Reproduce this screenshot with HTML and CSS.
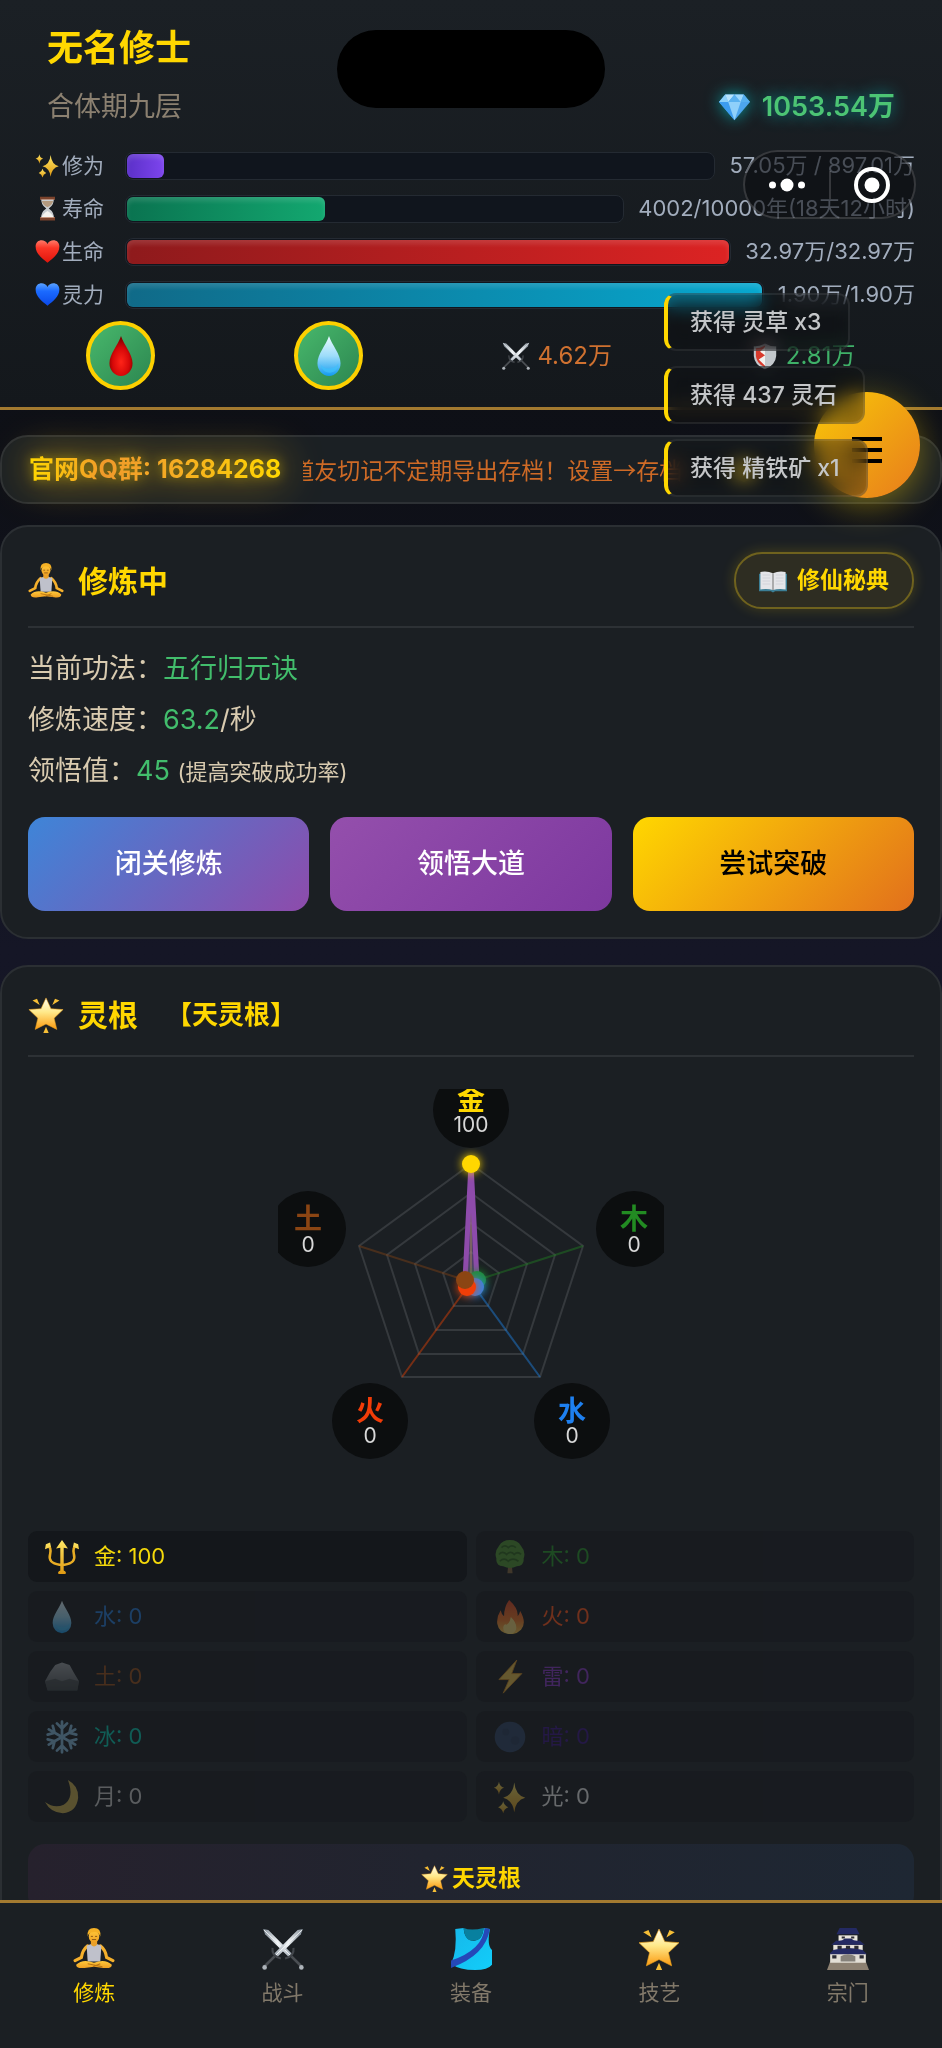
FILE: index.html
```html
<!DOCTYPE html>
<html lang="zh-CN">
<head>
<meta charset="utf-8">
<meta name="viewport" content="width=device-width, initial-scale=1">
<title>修仙</title>
<link rel="stylesheet" href="styles.css">
</head>
<body>
<svg class="sprite" aria-hidden="true">
  <defs>
    <linearGradient id="g-gold" x1="0" y1="0" x2="0" y2="1"><stop offset="0" stop-color="#ffe866"/><stop offset="1" stop-color="#e09a12"/></linearGradient>
    <linearGradient id="g-star" x1="0" y1="0" x2="0" y2="1"><stop offset="0" stop-color="#fffdf0"/><stop offset=".45" stop-color="#ffe98a"/><stop offset="1" stop-color="#fb9a10"/></linearGradient>
    <linearGradient id="g-skin" x1="0" y1="0" x2="0" y2="1"><stop offset="0" stop-color="#ffc83a"/><stop offset="1" stop-color="#ee9f22"/></linearGradient>
    <linearGradient id="g-water" x1="0" y1="0" x2="0" y2="1"><stop offset="0" stop-color="#eafaff"/><stop offset=".5" stop-color="#9ddcfa"/><stop offset="1" stop-color="#129bf0"/></linearGradient>
    <radialGradient id="g-blood" cx=".5" cy=".65" r=".6"><stop offset="0" stop-color="#ff2418"/><stop offset=".6" stop-color="#d60808"/><stop offset="1" stop-color="#7c0000"/></radialGradient>
    <linearGradient id="g-red" x1="0" y1="0" x2="0" y2="1"><stop offset="0" stop-color="#ff7a68"/><stop offset=".35" stop-color="#fb3526"/><stop offset="1" stop-color="#e0150c"/></linearGradient>
    <linearGradient id="g-blue" x1="0" y1="0" x2="0" y2="1"><stop offset="0" stop-color="#5aa2ff"/><stop offset=".35" stop-color="#1b6bff"/><stop offset="1" stop-color="#0a48e8"/></linearGradient>
    <linearGradient id="g-vest" x1="0" y1="0" x2="1" y2="1"><stop offset="0" stop-color="#16b8ea"/><stop offset="1" stop-color="#12cdfa"/></linearGradient>
    <linearGradient id="g-fire" x1="0" y1="0" x2="0" y2="1"><stop offset="0" stop-color="#e8421c"/><stop offset=".6" stop-color="#fb7a20"/><stop offset="1" stop-color="#ffd24a"/></linearGradient>
    <linearGradient id="g-blade" x1="0" y1="0" x2="1" y2="0"><stop offset="0" stop-color="#7c8792"/><stop offset=".5" stop-color="#eef2f5"/><stop offset="1" stop-color="#98a2ac"/></linearGradient>
    <linearGradient id="g-rock" x1="0" y1="0" x2="0" y2="1"><stop offset="0" stop-color="#a2a6aa"/><stop offset="1" stop-color="#4f5558"/></linearGradient>
  </defs>
  <symbol id="i-sparkles" viewBox="0 0 40 40">
    <g fill="url(#g-gold)"><path d="M25 3Q26.500 18 38 21Q26.500 24 25 38Q23.500 24 12 21Q23.500 18 25 3Z"/><path d="M7 2Q8 8 13 9Q8 10 7 17Q6 10 1 9Q6 8 7 2Z"/><path d="M12 25Q13 30 18 32Q13 34 12 39Q11 34 6 32Q11 30 12 25Z"/></g>
  </symbol>
  <symbol id="i-hourglass" viewBox="0 0 40 40">
    <path d="M10 4H30Q31 14 22 20Q31 26 30 36H10Q9 26 18 20Q9 14 10 4Z" fill="#c9cdd0"/>
    <path d="M11 8H29Q28 14 20 18Q12 14 11 8Z" fill="#b39a7f"/><path d="M10 35Q12 29 20 24Q28 29 30 35Z" fill="#f6f4ef"/>
    <path d="M8 1H32V5H8ZM8 35H32V39H8Z" fill="#7b432c"/><path d="M8 5H32V6H8ZM8 34H32V35H8Z" fill="#b77758"/>
  </symbol>
  <symbol id="i-heart-red" viewBox="0 0 40 40"><path d="M20 38C12 31 1 24 1 12C1 0 16-1 20 8C24-1 39 0 39 12C39 24 28 31 20 38Z" fill="url(#g-red)"/></symbol>
  <symbol id="i-heart-blue" viewBox="0 0 40 40"><path d="M20 38C12 31 1 24 1 12C1 0 16-1 20 8C24-1 39 0 39 12C39 24 28 31 20 38Z" fill="url(#g-blue)"/></symbol>
  <symbol id="i-gem" viewBox="0 0 40 40" preserveAspectRatio="none">
    <path d="M8 2H32L40 13L20 39L0 13Z" fill="#4da6ee"/><path d="M8 2L12 13H0Z" fill="#8bd0fb"/><path d="M8 2H20L12 13Z" fill="#b8e4fd"/><path d="M20 2L28 13H12Z" fill="#5ab2f0"/><path d="M20 2H32L28 13Z" fill="#9dd8fc"/><path d="M32 2L40 13H28Z" fill="#57b0ef"/><path d="M0 13H12L20 39Z" fill="#3c9cf0"/><path d="M12 13H28L20 39Z" fill="#8fd0fa"/>
  </symbol>
  <symbol id="i-blood" viewBox="0 0 40 40"><path d="M20 1C23 10 31 18 31 27A11 12 0 0 1 9 27C9 18 17 10 20 1Z" fill="url(#g-blood)"/></symbol>
  <symbol id="i-water" viewBox="0 0 40 40"><path d="M20 1C23 10 31 18 31 27A11 12 0 0 1 9 27C9 18 17 10 20 1Z" fill="url(#g-water)"/><path d="M12 28Q14 36 21 36Q29 35 29 27Q26 32 20 32Q15 32 12 28Z" fill="#3fc1fb" opacity=".7"/></symbol>
  <symbol id="i-swords" viewBox="0 0 40 40">
    <g id="one-sword"><path d="M1 1L6 2L29 25L26 28L3 6Z" fill="url(#g-blade)"/><path d="M2 2L27 26" stroke="#fff" stroke-width=".8"/><path d="M30 19Q31 27 22 29" fill="none" stroke="#42464b" stroke-width="2"/><path d="M28 27L37 36" stroke="#4a4e53" stroke-width="2.500"/><circle cx="37.500" cy="37.500" r="2.200" fill="#aeb4ba"/></g>
    <use href="#one-sword" transform="matrix(-1 0 0 1 40 0)"/>
  </symbol>
  <symbol id="i-shield" viewBox="0 0 40 40"><path d="M20 2Q29 7 36 6V20Q35 33 20 39Q5 33 4 20V6Q11 7 20 2Z" fill="#c3c8cc"/><path d="M20 5V36Q8 31 7 20V9Q13 9 20 5Z" fill="#d83a2c"/><path d="M20 7L13 14L20 19L11 25L20 34Z" fill="#f3f1ee"/></symbol>
  <symbol id="i-lotus" viewBox="0 0 40 40">
    <path d="M14 17Q9 21 8 28L2 31M26 17Q31 21 32 28L38 31" fill="none" stroke="#f5b02c" stroke-width="3" stroke-linecap="round"/>
    <path d="M17 12H23V17H17Z" fill="#e8a02a"/><path d="M13 17Q20 13 27 17L26 32H14Z" fill="#bfc1cb"/><path d="M17 16Q20 19 23 16L22 14H18Z" fill="#e8a02a"/>
    <ellipse cx="20" cy="8" rx="5" ry="6" fill="url(#g-skin)"/><path d="M14 8Q13 0 20 0Q27 0 26 8Q24 3 19 4Q15 4 14 8Z" fill="#f5b125"/><path d="M17 8H19M21 8H23M18 11H22" stroke="#7b4a12" stroke-width=".8"/>
    <path d="M3 35Q9 29 20 33Q31 29 37 35Q37 39 29 38L20 37L11 38Q3 39 3 35Z" fill="url(#g-skin)"/><path d="M14 34L28 37M26 34L19 37" stroke="#b87312" stroke-width="1"/>
  </symbol>
  <symbol id="i-book" viewBox="0 0 40 40" preserveAspectRatio="none"><path d="M0 8V37H17L20 39L23 37H40V8Z" fill="#3b7e95"/><path d="M2 5Q12 3 20 7V35Q12 32 2 34ZM38 5Q28 3 20 7V35Q28 32 38 34Z" fill="#e4e5e9"/><path d="M20 7V35" stroke="#777" stroke-width="1.500"/><path d="M5 10H16M5 15H16M5 20H16M5 25H16M24 10H35M24 15H35M24 20H35M24 25H35" stroke="#c9cbd2" stroke-width="1"/></symbol>
  <symbol id="i-star" viewBox="0 0 40 40"><path d="M20 1L25.500 13L39 14L29 23.500L32 36L20 30L8 36L11 23.500L1 14L14.500 13Z" fill="url(#g-star)" stroke="#f3a51d" stroke-width=".6" stroke-linejoin="round"/><path d="M5 4L10 2L13 9ZM35 4L30 2L27 9ZM20 33L23 40H17Z" fill="#f6be36"/></symbol>
  <symbol id="i-vest" viewBox="0 0 40 40"><path d="M5 1L13 0Q14 13 24 12Q31 11 32 0L38 1Q35 17 40 21V35Q36 40 24 40Q9 40 1 34Q7 22 5 1Z" fill="url(#g-vest)"/><path d="M13 0Q20 3 32 0Q31 12 23 12Q14 13 13 0Z" fill="#08809f"/><path d="M33 0L38 1Q34 26 1 38L1 31Q31 21 33 0Z" fill="#2548b8"/></symbol>
  <symbol id="i-castle" viewBox="0 0 40 40">
    <path d="M3 32H37L40 40H0Z" fill="#8d8172"/><path d="M3 24H37V33H3Z" fill="#e3dfd6"/><path d="M6 16H34V23H6Z" fill="#e6e2da"/><path d="M11 7H29V14H11Z" fill="#ebe7df"/>
    <path d="M12 0H28L31 6H9ZM9 12Q14 13 17 10H23Q26 13 31 12L36 16H4ZM6 21Q20 17 34 21L38 25H2Z" fill="#242a63"/><path d="M13 32V27Q20 23 27 27V32Z" fill="#85817a"/>
    <path d="M14 8H17V10H14ZM23 8H26V10H23ZM10 17H14V20H10ZM18 17H22V20H18ZM26 17H30V20H26ZM5 26H9V29H5ZM31 26H35V29H31Z" fill="#2c2c35"/>
  </symbol>
  <symbol id="i-trident" viewBox="0 0 40 40"><path d="M3 6Q8 9 6 17Q3 27 17 29H23Q37 27 34 17Q32 9 37 6" fill="none" stroke="#e9ad24" stroke-width="3"/><path d="M18 36V9L13 10L20 0L27 10L22 9V36Q26 38 24 40H16Q14 38 18 36ZM0 11L1 5L6 3L7 8ZM40 11L39 5L34 3L33 8Z" fill="url(#g-gold)"/></symbol>
  <symbol id="i-tree" viewBox="0 0 40 40"><path d="M18 28H22L23 39H17Z" fill="#8b6a3a"/><path d="M20 0Q29 0 33 7Q39 14 36 22Q37 30 28 31Q20 35 12 31Q3 30 4 22Q1 14 7 7Q11 0 20 0Z" fill="#4f9a2b"/><path d="M10 9Q14 5 18 9Q22 5 27 9M7 17Q11 12 16 17Q21 12 25 17Q29 13 33 17M8 25Q13 20 18 25Q23 20 30 25" fill="none" stroke="#2d6a17" stroke-width="2"/></symbol>
  <symbol id="i-fire" viewBox="0 0 40 40"><path d="M19 0Q30 10 29 19Q31 17 32 13Q40 27 33 35Q27 41 19 40Q7 39 5 28Q4 20 9 12Q10 17 13 19Q13 8 19 0Z" fill="url(#g-fire)"/><path d="M21 20Q29 28 27 35Q25 40 19 40Q12 39 12 32Q13 27 16 29Q20 27 21 20Z" fill="#ffe27a"/></symbol>
  <symbol id="i-rock" viewBox="0 0 40 40"><path d="M0 25L6 14L12 6L20 3L29 6L34 15L40 25L38 36H3Z" fill="url(#g-rock)"/><path d="M0 25L12 22L20 25L29 22L40 25L38 36H3Z" fill="#34393a" opacity=".6"/></symbol>
  <symbol id="i-bolt" viewBox="0 0 40 40"><path d="M28 0L7 23H19L12 39L34 16H22Z" fill="#f7c948" stroke="#d88d1b"/></symbol>
  <symbol id="i-snow" viewBox="0 0 40 40"><g fill="none" stroke="#86bfe6" stroke-width="3.200" stroke-linecap="round"><g id="snow-arm"><path d="M20 20V2M14 4L20 10L26 4"/></g><use href="#snow-arm" transform="rotate(60 20 20)"/><use href="#snow-arm" transform="rotate(120 20 20)"/><use href="#snow-arm" transform="rotate(180 20 20)"/><use href="#snow-arm" transform="rotate(240 20 20)"/><use href="#snow-arm" transform="rotate(300 20 20)"/></g></symbol>
  <symbol id="i-newmoon" viewBox="0 0 40 40"><circle cx="20" cy="20" r="18" fill="#2c4265"/><circle cx="15" cy="14" r="4" fill="#263a5a"/><circle cx="26" cy="24" r="5" fill="#263a5a"/></symbol>
  <symbol id="i-moon" viewBox="0 0 40 40"><path d="M27 0Q40 7 39 21Q37 38 21 39Q7 39 0 26Q11 34 22 29Q35 21 27 0Z" fill="#d4b44a"/></symbol>
  <symbol id="i-box" viewBox="0 0 40 40"><path d="M1 9L20 1L39 9V33L20 40L1 33Z" fill="#e7c22c"/></symbol>
</svg>

<div class="app">
  <header class="hero">
    <div class="identity">
      <div>
        <h1 class="name">无名修士</h1>
        <p class="realm">合体期九层</p>
      </div>
      <p class="stones"><svg class="gem"><use href="#i-gem"/></svg>1053.54万</p>
    </div>
    <div class="bars">
      <div class="bar-row"><span class="bar-label"><svg><use href="#i-sparkles"/></svg>修为</span><span class="track"><span class="fill exp" style="width:6.36%"></span></span><span class="bar-value">57.05万 / 897.01万</span></div>
      <div class="bar-row"><span class="bar-label"><svg><use href="#i-hourglass"/></svg>寿命</span><span class="track"><span class="fill life" style="width:40.02%"></span></span><span class="bar-value">4002/10000年(18天12小时)</span></div>
      <div class="bar-row"><span class="bar-label"><svg><use href="#i-heart-red"/></svg>生命</span><span class="track"><span class="fill hp" style="width:100%"></span></span><span class="bar-value">32.97万/32.97万</span></div>
      <div class="bar-row"><span class="bar-label"><svg><use href="#i-heart-blue"/></svg>灵力</span><span class="track"><span class="fill mp" style="width:100%"></span></span><span class="bar-value">1.90万/1.90万</span></div>
    </div>
    <div class="stats">
      <button class="potion" aria-label="生命药水"><svg><use href="#i-blood"/></svg></button>
      <button class="potion" aria-label="灵力药水"><svg><use href="#i-water"/></svg></button>
      <span class="stat attack"><svg><use href="#i-swords"/></svg>4.62万</span>
      <span class="stat defense"><svg><use href="#i-shield"/></svg>2.81万</span>
    </div>
  </header>

  <main class="content">
    <section class="notice">
      <strong class="group">官网QQ群: 16284268</strong>
      <div class="marquee"><p class="marquee-text">道友切记不定期导出存档！设置→存档 <svg><use href="#i-box"/></svg></p></div>
    </section>

    <section class="panel">
      <div class="panel-head">
        <h2 class="panel-title"><svg><use href="#i-lotus"/></svg>修炼中</h2>
        <button class="guide"><svg><use href="#i-book"/></svg>修仙秘典</button>
      </div>
      <div class="facts">
        <p>当前功法：<span class="good">五行归元诀</span></p>
        <p>修炼速度：<span class="good">63.2</span>/秒</p>
        <p>领悟值：<span class="good">45</span> <small>(提高突破成功率)</small></p>
      </div>
      <div class="actions">
        <button class="action retreat">闭关修炼</button>
        <button class="action insight">领悟大道</button>
        <button class="action breakthrough">尝试突破</button>
      </div>
    </section>

    <section class="panel">
      <div class="panel-head">
        <h2 class="panel-title"><svg><use href="#i-star"/></svg>灵根<span class="root-type">【天灵根】</span></h2>
      </div>
      <svg class="radar" viewBox="0 0 386 386" role="img" aria-label="灵根五行图">
        <g fill="none" stroke="#35393d" stroke-width="2">
          <path d="M193 75L305 157L262 288H124L81 157Z"/>
          <path d="M193 104L277 166L245 265H141L109 166Z"/>
          <path d="M193 134L249 175L228 241H158L137 175Z"/>
          <path d="M193 163L221 184L210 217H176L165 184Z"/>
        </g>
        <g stroke-width="2" opacity=".4"><path d="M193 193V75" stroke="#ffd700"/><path d="M193 193L305 157" stroke="#228b22"/><path d="M193 193L262 288" stroke="#1e90ff"/><path d="M193 193L124 288" stroke="#ff4500"/><path d="M193 193L81 157" stroke="#8b4513"/></g>
        <path d="M193 75L199 191L196 198H190L187 191Z" fill="#7d5ba4" fill-opacity=".55" stroke="#8e4bab" stroke-width="5"/>
        <circle class="glow-gold" cx="193" cy="75" r="9" fill="#ffd700"/>
        <circle class="glow-green" cx="199" cy="191" r="9" fill="#228b3a"/>
        <circle class="glow-blue" cx="197" cy="198" r="9" fill="#3d80d8"/>
        <circle class="glow-red" cx="189" cy="198" r="9" fill="#f03e08"/>
        <circle cx="187" cy="191" r="9" fill="#8b4513"/>
        <g fill="#0c0e0f"><circle cx="193" cy="21" r="38"/><circle cx="356" cy="140" r="38"/><circle cx="294" cy="332" r="38"/><circle cx="92" cy="332" r="38"/><circle cx="30" cy="140" r="38"/></g>
        <g class="radar-name"><text x="193" y="21" fill="#ffd700">金</text><text x="356" y="140" fill="#228b22">木</text><text x="294" y="332" fill="#1e80f0">水</text><text x="92" y="332" fill="#f23c08">火</text><text x="30" y="140" fill="#8b4513">土</text></g>
        <g class="radar-num"><text x="193" y="43">100</text><text x="356" y="163">0</text><text x="294" y="354">0</text><text x="92" y="354">0</text><text x="30" y="163">0</text></g>
      </svg>
      <ul class="roots">
        <li class="root metal"><svg><use href="#i-trident"/></svg>金: 100</li>
        <li class="root wood empty"><svg><use href="#i-tree"/></svg>木: 0</li>
        <li class="root water empty"><svg><use href="#i-water"/></svg>水: 0</li>
        <li class="root flame empty"><svg><use href="#i-fire"/></svg>火: 0</li>
        <li class="root earth empty"><svg><use href="#i-rock"/></svg>土: 0</li>
        <li class="root thunder empty"><svg><use href="#i-bolt"/></svg>雷: 0</li>
        <li class="root ice empty"><svg><use href="#i-snow"/></svg>冰: 0</li>
        <li class="root dark empty"><svg><use href="#i-newmoon"/></svg>暗: 0</li>
        <li class="root moon empty"><svg><use href="#i-moon"/></svg>月: 0</li>
        <li class="root light empty"><svg><use href="#i-sparkles"/></svg>光: 0</li>
      </ul>
      <div class="grade"><svg><use href="#i-star"/></svg>天灵根</div>
    </section>
  </main>

  <nav class="tabs">
    <a class="tab active" href="#cultivate"><svg><use href="#i-lotus"/></svg>修炼</a>
    <a class="tab" href="#battle"><svg><use href="#i-swords"/></svg>战斗</a>
    <a class="tab" href="#gear"><svg><use href="#i-vest"/></svg>装备</a>
    <a class="tab" href="#craft"><svg><use href="#i-star"/></svg>技艺</a>
    <a class="tab" href="#sect"><svg><use href="#i-castle"/></svg>宗门</a>
  </nav>

  <div class="island"></div>
  <button class="fab" aria-label="菜单"><span></span><span></span><span></span></button>
  <div class="toasts">
    <p class="toast">获得 灵草 x3</p>
    <p class="toast">获得 437 灵石</p>
    <p class="toast">获得 精铁矿 x1</p>
  </div>
  <div class="capsule">
    <button class="capsule-btn" aria-label="更多"><svg viewBox="0 0 36 36"><g fill="#fff"><circle cx="3.500" cy="18" r="3.500"/><circle cx="18" cy="18" r="6.500"/><circle cx="32.500" cy="18" r="3.500"/></g></svg></button>
    <span class="capsule-line"></span>
    <button class="capsule-btn" aria-label="关闭"><svg viewBox="0 0 36 36"><circle cx="18" cy="18" r="16" fill="none" stroke="#fff" stroke-width="4"/><circle cx="18" cy="18" r="7.500" fill="#fff"/></svg></button>
  </div>
</div>
</body>
</html>
```

FILE: styles.css
```css
* { box-sizing: border-box; margin: 0; padding: 0; }

body {
  background: #11131c;
  color: #d9cbb0;
  font-family: Inter, "Noto Sans CJK SC", sans-serif;
  font-size: 27px;
  line-height: 1.4;
}

button { border: 0; background: none; color: inherit; font: inherit; cursor: pointer; }
svg { display: block; flex: none; }
.sprite { position: absolute; width: 0; height: 0; }

.app {
  position: relative;
  display: flex;
  flex-direction: column;
  height: 100vh;
  overflow: hidden;
  background: linear-gradient(180deg, #0d0f14 0, #0e1017 480px, #151626 950px, #11131c 100%);
}

/* Header */
.hero {
  padding: 26px 27px 17px 35px;
  border-bottom: 3px solid #a37a30;
  background: linear-gradient(180deg, #1b2025, #14181c);
}
.identity {
  display: flex;
  justify-content: space-between;
  align-items: flex-end;
  padding: 0 20px 0 12px;
}
.name { color: #ffd700; font-size: 36px; line-height: 44px; font-weight: 700; }
.realm { margin-top: 19px; color: #8b8070; line-height: 36px; }
.stones {
  display: flex;
  align-items: center;
  gap: 12px;
  color: #4cc474;
  font-weight: 600;
  line-height: 36px;
  text-shadow: 0 0 16px rgba(0, 206, 209, .7);
}
.gem { width: 31px; height: 28px; filter: drop-shadow(0 0 8px rgba(0, 206, 209, .7)); }

.bars { display: flex; flex-direction: column; gap: 14px; margin-top: 26px; }
.bar-row { display: flex; align-items: center; gap: 14px; height: 29px; color: #a2adbd; font-size: 22px; }
.bar-label { display: flex; align-items: center; gap: 2px; width: 76px; font-size: 21px; }
.bar-label svg { width: 25px; height: 25px; }
.track {
  flex: 1;
  height: 28px;
  padding: 1px;
  border: 1px solid #242a32;
  border-radius: 8px;
  background: #10151d;
}
.fill { display: block; height: 100%; border-radius: 6px; box-shadow: inset 0 4px 5px rgba(255, 255, 255, .13); }
.exp { background: linear-gradient(90deg, #5b30c8, #7d45ee); }
.life { background: linear-gradient(90deg, #0a7350, #13a870); }
.hp { background: linear-gradient(90deg, #8e1a1c, #dc2323); }
.mp { background: linear-gradient(90deg, #106a88, #07a8cf); }

.stats {
  display: flex;
  justify-content: space-around;
  align-items: center;
  margin: 12px -10px 0 -18px;
}
.potion {
  display: grid;
  place-items: center;
  width: 69px;
  height: 69px;
  border: 4px solid #fdd000;
  border-radius: 50%;
  background: linear-gradient(135deg, #48b86c, #2c8650);
}
.potion svg { width: 42px; height: 42px; }
.stat { display: flex; align-items: center; gap: 7px; font-size: 24px; }
.stat svg { width: 28px; height: 28px; }
.attack { color: #cf7130; }
.defense { color: #3fb068; }

/* Scrolling content */
.content { flex: 1; min-height: 0; overflow-y: auto; scrollbar-width: none; padding-top: 25px; }

.notice {
  display: flex;
  align-items: center;
  gap: 22px;
  height: 69px;
  padding: 0 27px;
  border: 2px solid #2d3135;
  border-radius: 28px;
  background: #1b2024;
}
.group {
  flex: none;
  font-size: 25px;
  font-weight: 700;
  color: transparent;
  background: linear-gradient(90deg, #ffd700, #f09a2a 30%, #f5ae22 60%, #ffd700);
  background-clip: text;
  -webkit-background-clip: text;
  filter: drop-shadow(0 0 6px rgba(255, 215, 0, .5)) drop-shadow(0 0 20px rgba(255, 190, 0, .8));
}
.marquee { flex: 1; min-width: 0; overflow: hidden; }
.marquee-text {
  display: flex;
  align-items: center;
  gap: 50px;
  margin-left: -12px;
  color: #ce6a26;
  font-family: "Noto Sans CJK SC", sans-serif;
  font-size: 23px;
  white-space: nowrap;
}
.marquee-text svg { width: 24px; height: 24px; }

.panel {
  margin-top: 21px;
  padding: 25px 26px 26px;
  border: 2px solid #2b2f33;
  border-radius: 28px;
  background: #1b1f23;
}
.panel + .panel { margin-top: 26px; }
.panel-head {
  display: flex;
  justify-content: space-between;
  align-items: center;
  min-height: 65px;
  padding-bottom: 17px;
  border-bottom: 2px solid #2d3135;
}
.panel-title {
  display: flex;
  align-items: center;
  gap: 14px;
  color: #ffd700;
  font-size: 30px;
  line-height: 46px;
  font-weight: 700;
}
.panel-title svg { width: 36px; height: 36px; }
.root-type { margin-left: 14px; font-size: 26px; }
.guide {
  display: flex;
  align-items: center;
  gap: 10px;
  height: 57px;
  padding: 0 23px;
  border: 2px solid #6f621e;
  border-radius: 28px;
  background: #2e2d22;
  box-shadow: 0 0 14px rgba(255, 215, 0, .2);
  color: #ffd700;
  font-size: 23px;
  font-weight: 700;
}
.guide svg { width: 28px; height: 24px; }

.facts { margin-top: 15px; line-height: 51px; }
.facts small { font-size: 22px; }
.good { color: #42bd6c; }

.actions { display: grid; grid-template-columns: repeat(3, 1fr); gap: 21px; margin-top: 19px; }
.action { height: 94px; border-radius: 17px; color: #fff; font-weight: 500; }
.retreat { background: linear-gradient(135deg, #3e85d8, #8e4bab); }
.insight { background: linear-gradient(135deg, #944fac, #7d389f); }
.breakthrough { background: linear-gradient(135deg, #ffd700, #e2701c); color: #000; }

.radar { width: 386px; height: 386px; margin: 32px auto 56px; overflow: hidden; }
.radar text { text-anchor: middle; }
.radar-name { font-size: 28px; font-weight: 700; }
.radar-num { fill: #d8d8d8; font-size: 21px; }
.glow-gold { filter: drop-shadow(0 0 5px #ffd700); }
.glow-green { filter: drop-shadow(0 0 5px #228b22); }
.glow-blue { filter: drop-shadow(0 0 5px #1e90ff); }
.glow-red { filter: drop-shadow(0 0 5px #ff4500); }

.roots { display: grid; grid-template-columns: 1fr 1fr; gap: 9px; list-style: none; }
.root {
  display: flex;
  align-items: center;
  gap: 15px;
  height: 51px;
  padding: 0 17px;
  border-radius: 9px;
  background: #14171b;
  font-size: 22px;
}
.root svg { width: 34px; height: 34px; }
.empty { opacity: .4; }
.empty svg { opacity: .85; }
.metal { color: #f5d90a; }
.wood { color: #228b22; }
.water { color: #1e6fc8; }
.flame { color: #f04a12; }
.earth { color: #8b4513; }
.thunder { color: #7a2fb4; }
.ice { color: #00b8a0; }
.dark { color: #33107a; }
.moon { color: #b8b8b8; }
.light { color: #d8d8d8; }

.grade {
  display: flex;
  justify-content: center;
  align-items: center;
  gap: 4px;
  margin-top: 22px;
  height: 68px;
  border-radius: 17px;
  background: linear-gradient(90deg, #26212d, #21242f 45%, #1e2733);
  color: #ffd700;
  font-size: 23px;
  font-weight: 700;
}
.grade svg { width: 27px; height: 29px; }

/* Bottom navigation */
.tabs {
  display: grid;
  grid-template-columns: repeat(5, 1fr);
  flex: none;
  height: 148px;
  padding-top: 25px;
  border-top: 3px solid #a37a30;
  background: #1b1f23;
}
.tab {
  display: flex;
  flex-direction: column;
  align-items: center;
  gap: 7px;
  color: #82796a;
  font-size: 21px;
  line-height: 32px;
  text-decoration: none;
}
.tab svg { width: 42px; height: 42px; }
.tab.active { color: #ffd700; }

/* Overlays */
.island {
  position: absolute;
  top: 30px;
  left: 50%;
  width: 268px;
  height: 78px;
  margin-left: -134px;
  border-radius: 39px;
  background: #000;
}
.fab {
  position: absolute;
  top: 392px;
  right: 22px;
  display: flex;
  flex-direction: column;
  align-items: center;
  justify-content: center;
  gap: 7px;
  width: 106px;
  height: 106px;
  padding-top: 9px;
  border-radius: 50%;
  background: linear-gradient(135deg, #f8c808, #e87c1c);
  box-shadow: 0 8px 34px rgba(255, 215, 0, .4);
}
.fab span { width: 30px; height: 4px; background: #000; }

.toasts {
  position: absolute;
  top: 293px;
  left: 664px;
  display: flex;
  flex-direction: column;
  align-items: flex-start;
  gap: 15px;
}
.toast {
  padding: 0 26px 0 22px;
  border: 2px solid rgba(255, 255, 255, .08);
  border-left: 4px solid #ffd700;
  border-radius: 12px;
  background: rgba(18, 20, 23, .3);
  backdrop-filter: blur(9px) brightness(.75);
  color: #c4c6c8;
  font-size: 23px;
  font-weight: 500;
  line-height: 54px;
}

.capsule {
  position: absolute;
  top: 150px;
  right: 26px;
  display: flex;
  align-items: center;
  width: 173px;
  height: 69px;
  border: 2px solid rgba(255, 255, 255, .16);
  border-radius: 35px;
  background: rgba(12, 14, 16, .6);
}
.capsule-btn { flex: 1; display: grid; place-items: center; }
.capsule-btn svg { width: 36px; height: 36px; }
.capsule-line { width: 2px; height: 28px; background: rgba(255, 255, 255, .16); }
```
